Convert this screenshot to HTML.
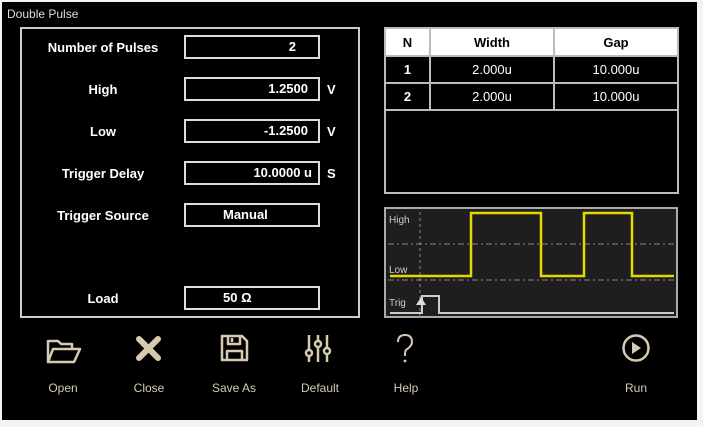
<!DOCTYPE html>
<html><head><style>
body{margin:0;width:703px;height:427px;background:#f4f4f4;position:relative;overflow:hidden;font-family:"Liberation Sans",sans-serif}
#bg{position:absolute;left:2px;top:2px;width:695px;height:418px;background:#000}
.t{position:absolute;color:#fff;font-size:13px;white-space:nowrap}
.lbl{position:absolute;width:160px;left:23px;text-align:center;color:#fff;font-size:13px;font-weight:bold}
.box{position:absolute;left:184px;width:132px;height:20px;border:2px solid #ddd;color:#fff;font-size:13px;font-weight:bold;line-height:20px;box-sizing:content-box}
.u{position:absolute;left:327px;color:#fff;font-size:13px;font-weight:bold}
.bl{position:absolute;color:#d6cbb0;font-size:12px;width:80px;text-align:center;top:381px}
table{position:absolute;left:384px;top:27px;border-collapse:collapse;font-size:13px}
td{border:2px solid #bbb;text-align:center;height:25px;color:#fff;padding:0}
</style></head><body>
<div id="bg"></div>
<div class="t" style="left:7px;top:7px;color:#ddd;font-size:12px">Double Pulse</div>
<div style="position:absolute;left:20px;top:27px;width:336px;height:287px;border:2px solid #ccc"></div>
<div class="lbl" style="top:40px">Number of Pulses</div>
<div class="box" style="top:35px;text-align:right"><span style="padding-right:22px">2</span></div>
<div class="lbl" style="top:82px">High</div>
<div class="box" style="top:77px;text-align:right"><span style="padding-right:10px">1.2500</span></div><div class="u" style="top:82px">V</div>
<div class="lbl" style="top:124px">Low</div>
<div class="box" style="top:119px;text-align:right"><span style="padding-right:10px">-1.2500</span></div><div class="u" style="top:124px">V</div>
<div class="lbl" style="top:166px">Trigger Delay</div>
<div class="box" style="top:161px;text-align:right"><span style="padding-right:6px">10.0000 u</span></div><div class="u" style="top:166px">S</div>
<div class="lbl" style="top:208px">Trigger Source</div>
<div class="box" style="top:203px;text-align:left"><span style="padding-left:37px">Manual</span></div>
<div class="lbl" style="top:291px">Load</div>
<div class="box" style="top:286px;text-align:left"><span style="padding-left:37px">50 Ω</span></div>

<div style="position:absolute;left:384px;top:27px;width:291px;height:163px;border:2px solid #bbb"></div>
<table>
<tr style="background:#fff"><td style="width:43px;color:#000;height:26px;font-weight:bold">N</td><td style="width:122px;color:#000;font-weight:bold">Width</td><td style="width:122px;color:#000;font-weight:bold">Gap</td></tr>
<tr><td style="font-weight:bold">1</td><td>2.000u</td><td>10.000u</td></tr>
<tr><td style="font-weight:bold">2</td><td>2.000u</td><td>10.000u</td></tr>
</table>

<svg style="position:absolute;left:384px;top:207px" width="294" height="111">
<rect x="1" y="1" width="292" height="109" fill="#1e1e1e" stroke="#aaa" stroke-width="2"/>
<line x1="36" y1="5" x2="36" y2="110" stroke="#888" stroke-dasharray="3,3"/>
<line x1="4" y1="37" x2="290" y2="37" stroke="#888" stroke-dasharray="6,3,2,3"/>
<line x1="4" y1="73" x2="290" y2="73" stroke="#888" stroke-dasharray="6,3,2,3"/>
<polyline points="6,69 87,69 87,6 157,6 157,69 200,69 200,6 248,6 248,69 290,69" fill="none" stroke="#e5d800" stroke-width="2.5"/>
<polyline points="6,106 38,106 38,89 55,89 55,106 290,106" fill="none" stroke="#ccc" stroke-width="2"/>
<polygon points="37,90 32,98 42,98" fill="#ddd"/>
<text x="5" y="16" fill="#ccc" font-size="10" font-family="Liberation Sans">High</text>
<text x="5" y="66" fill="#ccc" font-size="10" font-family="Liberation Sans">Low</text>
<text x="5" y="99" fill="#ccc" font-size="10" font-family="Liberation Sans">Trig</text>
</svg>

<svg style="position:absolute;left:0;top:330px" width="703" height="40" fill="none" stroke="#d6cbb0" stroke-width="2.5" stroke-linejoin="round">
<path d="M48,32 V11 H58 L61,14 H72 V18 M48,32 L53,19 H80 L74,32 Z"/>
<path d="M139,9 L158,28 M158,9 L139,28" stroke-width="6" stroke-linecap="round"/>
<path d="M222,6 H242 L247,11 V30 H222 Z M228,6 V14 H240 V6 M227,30 V21 H242 V30"/>
<path d="M232,8 V12" />
<path d="M309,5 V32 M318,5 V32 M327,5 V32" />
<circle cx="309" cy="23" r="3" fill="#000"/><circle cx="318" cy="14" r="3" fill="#000"/><circle cx="327" cy="21" r="3" fill="#000"/>
<path d="M398,12 Q398,5 405,5 Q412,5 412,12 Q412,16 406,20 Q405,21 405,25 V26" stroke-width="2"/>
<circle cx="405" cy="31" r="1.4" fill="#d6cbb0" stroke="none"/>
<circle cx="636" cy="18" r="12.5"/>
<polygon points="632,12 641,18 632,24" fill="#d6cbb0" stroke="none"/>
</svg>
<div class="bl" style="left:23px">Open</div>
<div class="bl" style="left:109px">Close</div>
<div class="bl" style="left:194px">Save As</div>
<div class="bl" style="left:280px">Default</div>
<div class="bl" style="left:366px">Help</div>
<div class="bl" style="left:596px">Run</div>
</body></html>
